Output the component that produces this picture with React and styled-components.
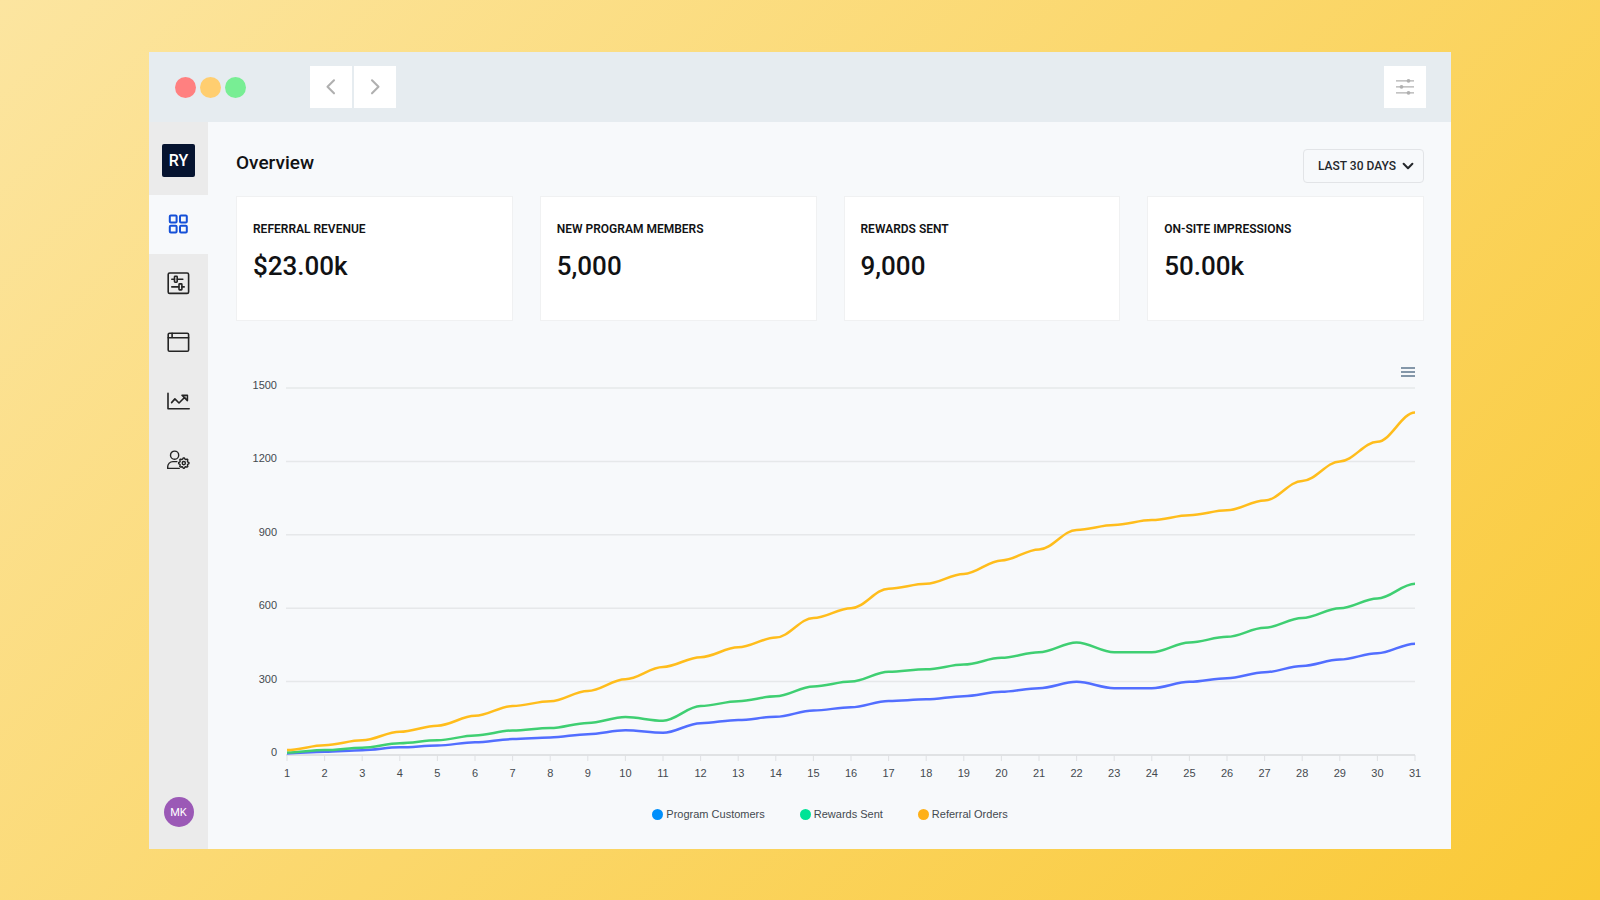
import React, { useLayoutEffect, useRef, useState } from "react";
import styled, { createGlobalStyle } from "styled-components";

const GlobalStyle = createGlobalStyle`
  *, *::before, *::after { box-sizing: border-box; }
  body { margin: 0; font-family: Roboto, "Liberation Sans", sans-serif; color: #111214; }
  button, select { font: inherit; color: inherit; border: 0; padding: 0; cursor: pointer; }
  h1, h2, p, ul { margin: 0; padding: 0; }
  ul { list-style: none; }
  svg { display: block; }
`;

const Backdrop = styled.div`
  min-height: 100vh;
  display: flex;
  padding: 52px 149px 51px;
  background: linear-gradient(135deg, #fce5a0 0%, #fac936 100%);
`;

const AppWindow = styled.div`
  flex: 1;
  min-width: 0;
  display: flex;
  flex-direction: column;
  background: #f7f9fb;
`;

const TitleBar = styled.header`
  height: 70px;
  display: flex;
  align-items: center;
  padding: 0 25px 0 26px;
  background: #e6ecf0;
`;

const Lights = styled.div`
  display: flex;
  gap: 4px;
`;

const Light = styled.span`
  width: 21px;
  height: 21px;
  border-radius: 50%;
  background: ${(p) => p.$color};
`;

const History = styled.div`
  display: flex;
  gap: 2px;
  margin-left: 64px;
`;

const BarButton = styled.button`
  width: 42px;
  height: 42px;
  display: grid;
  place-items: center;
  background: #fff;
  color: #b0b0b0;
  ${(p) => p.$end && "margin-left: auto;"}
`;

const Body = styled.div`
  flex: 1;
  display: flex;
`;

const Sidebar = styled.nav`
  width: 59px;
  display: flex;
  flex-direction: column;
  align-items: center;
  padding: 22px 0;
  background: #ebebeb;
`;

const Logo = styled.a`
  width: 33px;
  height: 33px;
  display: grid;
  place-items: center;
  border-radius: 2px;
  background: #061430;
  color: #fff;
  font-size: 16px;
  font-weight: 500;
  text-decoration: none;
`;

const NavList = styled.ul`
  width: 100%;
  margin-top: 18px;
`;

const NavLink = styled.a`
  height: 59px;
  display: grid;
  place-items: center;
  padding: 0 1px 1px 0;
  color: ${(p) => (p.$active ? "#1550d8" : "#242424")};
  background: ${(p) => (p.$active ? "#f7f9fb" : "transparent")};
`;

const Avatar = styled.button`
  width: 30px;
  height: 30px;
  margin-top: auto;
  border-radius: 50%;
  background: #9b59b6;
  color: #fff;
  font-size: 11px;
  font-weight: 400;
`;

const Main = styled.main`
  flex: 1;
  min-width: 0;
  padding: 27px 27px 26px 28px;
`;

const PageHead = styled.div`
  display: flex;
  justify-content: space-between;
  align-items: flex-start;
`;

const PageTitle = styled.h1`
  font-size: 19px;
  line-height: 27px;
  font-weight: 500;
`;

const RangePicker = styled.label`
  display: grid;
  grid-template-columns: 1fr 30px;
  align-items: center;
  width: 121px;
  height: 34px;
  border: 1px solid #e2e4e7;
  border-radius: 4px;
  color: #25282c;

  svg { grid-area: 1 / 2; pointer-events: none; justify-self: center; }
`;

const RangeSelect = styled.select`
  grid-area: 1 / 1 / 2 / 3;
  width: 100%;
  height: 32px;
  padding-left: 14px;
  appearance: none;
  background: transparent;
  font-size: 12px;
  font-weight: 500;
`;

const Cards = styled.section`
  display: grid;
  grid-template-columns: repeat(4, 1fr);
  gap: 27px;
  margin-top: 13px;
`;

const Card = styled.article`
  height: 125px;
  padding: 24px 16px;
  background: #fff;
  border: 1px solid #f0f1f2;
`;

const CardLabel = styled.h2`
  font-size: 12px;
  line-height: 16px;
  font-weight: 600;
  text-transform: uppercase;
`;

const CardValue = styled.p`
  margin-top: 13px;
  font-size: 26px;
  line-height: 32px;
  font-weight: 500;
`;

const ChartPanel = styled.section`
  margin-top: 42px;
  font-family: "Liberation Sans", Arial, sans-serif;
`;

const ChartTools = styled.div`
  display: flex;
  justify-content: flex-end;
  padding-right: 9px;
`;

const MenuButton = styled.button`
  width: 14px;
  height: 17px;
  display: grid;
  place-items: center;
  background: none;
  color: #8497a9;
`;

const Plot = styled.svg`
  width: 100%;
  height: 406px;
  font-size: 11px;
  fill: #44494f;
`;

const Legend = styled.ul`
  display: flex;
  justify-content: center;
  gap: 35px;
  margin-top: 20px;
`;

const LegendButton = styled.button`
  display: flex;
  align-items: center;
  gap: 3px;
  background: none;
  color: #44494f;
  font-size: 11px;
  line-height: 16px;

  &::before {
    content: "";
    width: 11px;
    height: 11px;
    border-radius: 50%;
    background: ${(p) => p.$color};
  }
`;

const ORDERS = [20, 40, 60, 95, 120, 160, 200, 220, 262, 310, 360, 400, 440, 480, 560, 600, 680, 700, 740, 795, 840, 920, 940, 960, 980, 1000, 1040, 1120, 1200, 1280, 1400];
const REWARDS = [10, 20, 30, 48, 60, 80, 100, 110, 131, 155, 140, 200, 220, 240, 280, 300, 340, 350, 370, 397, 420, 460, 420, 420, 460, 483, 520, 560, 600, 640, 700];
const CUSTOMERS = REWARDS.map((v) => v * 0.65);

const SERIES = [
  { name: "Program Customers", dot: "#008ffb", line: "#526eff", data: CUSTOMERS },
  { name: "Rewards Sent", dot: "#00e396", line: "#3fcf72", data: REWARDS },
  { name: "Referral Orders", dot: "#feb019", line: "#ffbd1c", data: ORDERS },
];
const LEVELS = [1500, 1200, 900, 600, 300, 0];
const TOP = 8;
const BASE = 375;

const yOf = (v) => BASE - (v / 1500) * (BASE - TOP);

function curve(data, xOf) {
  const ease = (xOf(1) - xOf(0)) * 0.35;
  return data
    .map((v, i) => {
      const x = xOf(i);
      const y = yOf(v);
      if (i === 0) return `M${x} ${y}`;
      return `C${xOf(i - 1) + ease} ${yOf(data[i - 1])} ${x - ease} ${y} ${x} ${y}`;
    })
    .join("");
}

function LineChart() {
  const ref = useRef(null);
  const [width, setWidth] = useState(1188);
  useLayoutEffect(() => {
    const measure = () => setWidth(ref.current.getBoundingClientRect().width);
    measure();
    const observer = new ResizeObserver(measure);
    observer.observe(ref.current);
    return () => observer.disconnect();
  }, []);

  const left = 51;
  const right = width - 9;
  const xOf = (i) => left + (i * (right - left)) / 30;

  return (
    <Plot ref={ref} role="img" aria-label="Daily totals">
      {LEVELS.map((v) => (
        <g key={v}>
          <line x1={left - 1} x2={right} y1={yOf(v)} y2={yOf(v)} stroke={v ? "#e6e8ea" : "#e0e2e4"} strokeWidth={v ? 1.5 : 2} />
          <text x={left - 10} y={yOf(v) + 1} textAnchor="end">{v}</text>
        </g>
      ))}
      {ORDERS.map((_, i) => (
        <g key={i}>
          <line x1={xOf(i)} x2={xOf(i)} y1={BASE} y2={BASE + 6} stroke="#dfe1e4" />
          <text x={xOf(i)} y={BASE + 22} textAnchor="middle">{i + 1}</text>
        </g>
      ))}
      {SERIES.map((s) => (
        <path key={s.name} d={curve(s.data, xOf)} fill="none" stroke={s.line} strokeWidth="2.5" />
      ))}
    </Plot>
  );
}

const iconProps = { width: 24, height: 24, viewBox: "0 0 24 24", fill: "none", stroke: "currentColor", strokeWidth: 1.6, strokeLinejoin: "round", strokeLinecap: "round", "aria-hidden": true };

const GridIcon = () => (
  <svg {...iconProps} strokeWidth="2">
    <rect x="3.8" y="3.6" width="6.8" height="6.8" rx="1" />
    <rect x="14" y="3.6" width="6.8" height="6.8" rx="1" />
    <rect x="3.8" y="13.8" width="6.8" height="6.8" rx="1" />
    <rect x="14" y="13.8" width="6.8" height="6.8" rx="1" />
  </svg>
);
const ControlsIcon = () => (
  <svg {...iconProps}>
    <rect x="2.2" y="2" width="20.4" height="20.4" rx="1.5" />
    <path d="M5.8 8.2h2.6M11.4 8.2h5.4M5.8 15.9h7M16 15.9h2.2" />
    <rect x="8.5" y="5.2" width="2.7" height="6" rx=".6" />
    <rect x="13" y="12.9" width="2.9" height="6" rx=".6" />
  </svg>
);
const BrowserIcon = () => (
  <svg {...iconProps}>
    <rect x="2.200" y="3.2" width="20.4" height="18" rx="1.3" />
    <path d="M2.200 7.800h20.4M6.100 3.300v4.3" />
  </svg>
);
const TrendIcon = () => (
  <svg {...iconProps}>
    <path d="M2 4.200v15.6h21.200" />
    <path d="m5.6 13.6 3.3-3.7 4.1 4.1 6-6M16 6.200h5.4v5.4z" />
  </svg>
);
const GEAR = Array.from({ length: 32 }, (_, i) => {
  const r = i % 4 < 2 ? 5.2 : 4.1;
  const a = ((i - 0.5) * Math.PI) / 16;
  return `${(17.8 + r * Math.cos(a)).toFixed(2)},${(15.1 + r * Math.sin(a)).toFixed(2)}`;
}).join(" ");
const UserGearIcon = () => (
  <svg {...iconProps} strokeWidth="1.4">
    <circle cx="8.6" cy="7.2" r="4.1" />
    <path d="M13.2 20.4H1.7v-1.6a5.2 5.2 0 0 1 5.2-5.2h4" />
    <polygon points={GEAR} />
    <circle cx="17.8" cy="15.1" r="1.6" />
  </svg>
);
const ArrowIcon = ({ d }) => (
  <svg {...iconProps} width="20" height="20" viewBox="0 0 20 20" strokeWidth="2.1">
    <path d={d} />
  </svg>
);
const TuneIcon = () => (
  <svg {...iconProps} width="20" height="20" viewBox="0 0 20 20" strokeWidth="1.2" strokeLinecap="butt">
    <path d="M1 3.800h18M1 9.800h18M1 15.800h18" />
    <g fill="currentColor" stroke="none">
      <circle cx="13.5" cy="3.8" r="1.9" />
      <circle cx="6.5" cy="9.8" r="1.9" />
      <circle cx="13.5" cy="15.8" r="1.9" />
    </g>
  </svg>
);

const NAV = [
  { label: "Overview", Icon: GridIcon },
  { label: "Programs", Icon: ControlsIcon },
  { label: "Pages", Icon: BrowserIcon },
  { label: "Analytics", Icon: TrendIcon },
  { label: "Account", Icon: UserGearIcon },
];

const STATS = [
  ["Referral revenue", "$23.00k"],
  ["New program members", "5,000"],
  ["Rewards sent", "9,000"],
  ["On-site impressions", "50.00k"],
];

export default function App() {
  return (
    <>
      <GlobalStyle />
      <Backdrop>
        <AppWindow>
          <TitleBar>
            <Lights>
              <Light $color="#ff8080" />
              <Light $color="#ffce70" />
              <Light $color="#78ee94" />
            </Lights>
            <History>
              <BarButton aria-label="Back"><ArrowIcon d="M13 3.3 6.5 9.8l6.5 6.5" /></BarButton>
              <BarButton aria-label="Forward"><ArrowIcon d="m7 3.3 6.5 6.5L7 16.3" /></BarButton>
            </History>
            <BarButton $end aria-label="Settings"><TuneIcon /></BarButton>
          </TitleBar>
          <Body>
            <Sidebar aria-label="Main">
              <Logo href="#home">RY</Logo>
              <NavList>
                {NAV.map(({ label, Icon }, i) => (
                  <li key={label}>
                    <NavLink href={`#${label.toLowerCase()}`} aria-label={label} $active={i === 0}><Icon /></NavLink>
                  </li>
                ))}
              </NavList>
              <Avatar>MK</Avatar>
            </Sidebar>
            <Main>
              <PageHead>
                <PageTitle>Overview</PageTitle>
                <RangePicker>
                  <RangeSelect aria-label="Date range" defaultValue="30">
                    <option value="30">LAST 30 DAYS</option>
                  </RangeSelect>
                  <svg {...iconProps} width="12" height="12" viewBox="0 0 12 12" strokeWidth="2">
                    <path d="M1.600 3.800 6 8.200l4.400-4.400" />
                  </svg>
                </RangePicker>
              </PageHead>
              <Cards>
                {STATS.map(([label, value]) => (
                  <Card key={label}>
                    <CardLabel>{label}</CardLabel>
                    <CardValue>{value}</CardValue>
                  </Card>
                ))}
              </Cards>
              <ChartPanel>
                <ChartTools>
                  <MenuButton aria-label="Chart menu">
                    <svg width="14" height="10" viewBox="0 0 14 10" fill="currentColor">
                      <path d="M0 0h14v2H0zM0 4h14v2H0zM0 8h14v2H0z" />
                    </svg>
                  </MenuButton>
                </ChartTools>
                <LineChart />
                <Legend>
                  {SERIES.map((s) => (
                    <li key={s.name}><LegendButton $color={s.dot}>{s.name}</LegendButton></li>
                  ))}
                </Legend>
              </ChartPanel>
            </Main>
          </Body>
        </AppWindow>
      </Backdrop>
    </>
  );
}
